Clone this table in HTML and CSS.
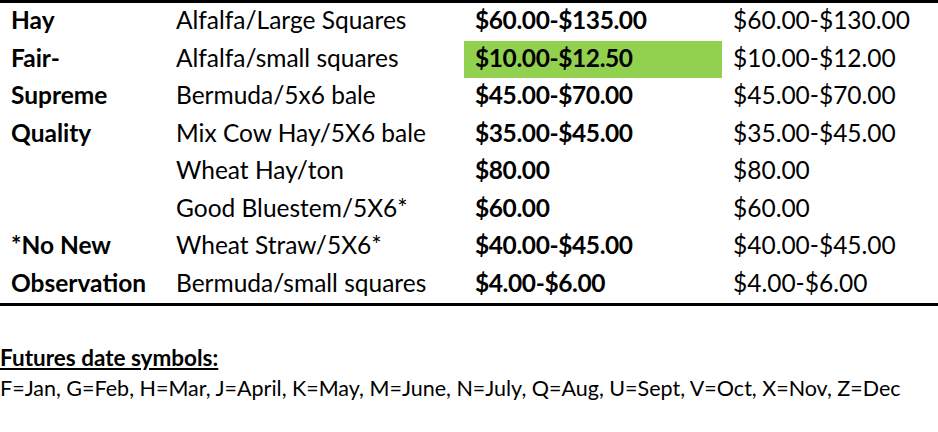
FILE: index.html
```html
<!DOCTYPE html>
<html>
<head>
<meta charset="utf-8">
<link rel="stylesheet" href="styles.css">
</head>
<body>
<table class="prices">
  <colgroup>
    <col class="c1"><col class="c2"><col class="c3"><col class="c4">
  </colgroup>
  <tr><td class="grade">Hay</td><td>Alfalfa/Large Squares</td><td class="bold">$60.00-$135.00</td><td>$60.00-$130.00</td></tr>
  <tr><td class="grade">Fair-</td><td>Alfalfa/small squares</td><td class="bold hl">$10.00-$12.50</td><td>$10.00-$12.00</td></tr>
  <tr><td class="grade">Supreme</td><td>Bermuda/5x6 bale</td><td class="bold">$45.00-$70.00</td><td>$45.00-$70.00</td></tr>
  <tr><td class="grade">Quality</td><td>Mix Cow Hay/5X6 bale</td><td class="bold">$35.00-$45.00</td><td>$35.00-$45.00</td></tr>
  <tr><td class="grade"></td><td>Wheat Hay/ton</td><td class="bold">$80.00</td><td>$80.00</td></tr>
  <tr><td class="grade"></td><td>Good Bluestem/5X6*</td><td class="bold">$60.00</td><td>$60.00</td></tr>
  <tr><td class="grade">*No New</td><td>Wheat Straw/5X6*</td><td class="bold">$40.00-$45.00</td><td>$40.00-$45.00</td></tr>
  <tr><td class="grade">Observation</td><td>Bermuda/small squares</td><td class="bold">$4.00-$6.00</td><td>$4.00-$6.00</td></tr>
</table>
<div class="notes">
  <p class="notes-title">Futures date symbols:</p>
  <p class="notes-text">F=Jan, G=Feb, H=Mar, J=April, K=May, M=June, N=July, Q=Aug, U=Sept, V=Oct, X=Nov, Z=Dec</p>
</div>
</body>
</html>
```
FILE: styles.css
```css
html, body {
  margin: 0;
  padding: 0;
  background: #fff;
  color: #000;
}
body {
  font-family: "Lato", "Liberation Sans", sans-serif;
}
.prices {
  width: 938px;
  border-collapse: separate;
  border-spacing: 0;
  table-layout: fixed;
  border-top: 3px solid #000;
  border-bottom: 3px solid #000;
  font-size: 24.5px;
}
.c1 { width: 165px; }
.c2 { width: 299px; }
.c3 { width: 258px; }
.c4 { width: 216px; }
.prices td {
  height: 37.5px;
  padding: 0 0 3px 11px;
  box-sizing: border-box;
  white-space: nowrap;
  vertical-align: middle;
  line-height: 30px;
}
.grade, .bold { font-weight: 700; }
.bold { letter-spacing: -0.4px; }
.hl { background: #92d050; }
.notes {
  padding-top: 40px;
}
.notes p { margin: 0; }
.notes-title {
  font-weight: 700;
  text-decoration: underline;
  font-size: 22.5px;
  line-height: 24px;
}
.notes-text {
  margin-top: 6px !important;
  font-size: 21.5px;
  line-height: 24px;
}
```
